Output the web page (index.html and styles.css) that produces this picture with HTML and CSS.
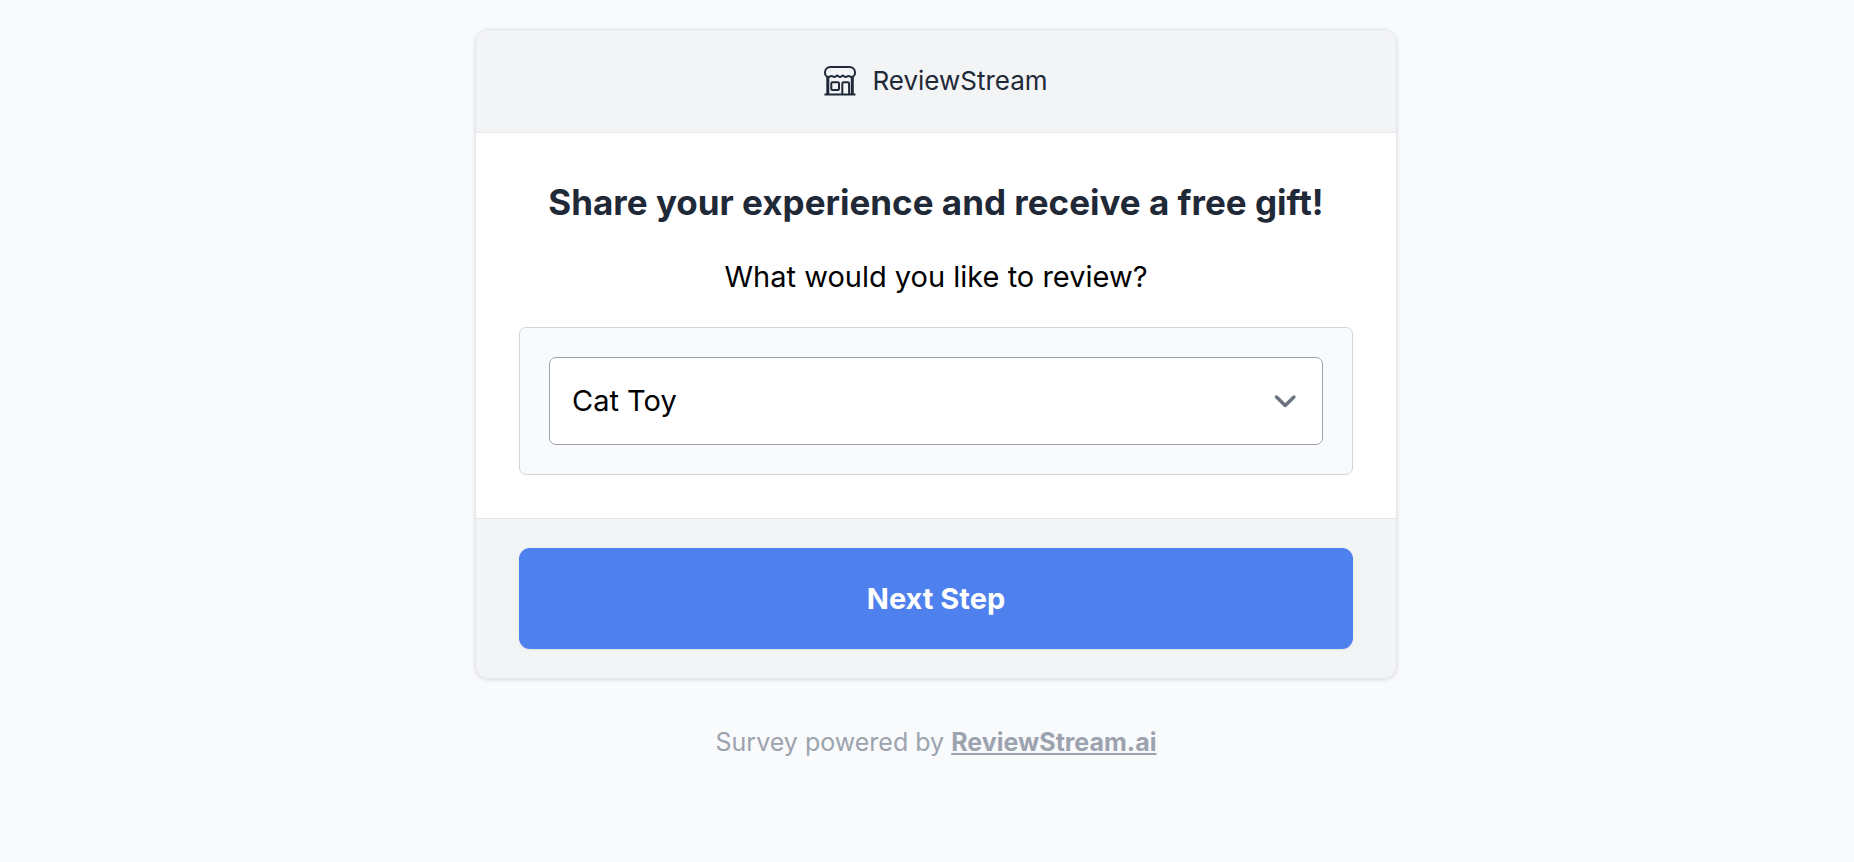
FILE: index.html
```html
<!DOCTYPE html>
<html lang="en">
<head>
<meta charset="utf-8">
<meta name="viewport" content="width=device-width, initial-scale=1">
<title>ReviewStream</title>
<link rel="stylesheet" href="styles.css">
</head>
<body>
<main class="survey">
  <form class="card">
    <header class="card-header">
      <svg class="store-icon" viewBox="0 0 32 32" aria-hidden="true">
        <path d="M6.500 2h19c3.500 0 5.500 2.500 5.500 5.500c0 2.500-1.500 4.500-3.500 4.500c-1.500 0-2-1-3-1s-1.500 1-2.900 1s-1.800-1.500-2.800-1.500s-1.500 1.500-2.800 1.500s-1.800-1.500-2.800-1.500s-1.500 1.500-2.800 1.500s-1.900-1-2.900-1s-1.500 1-3 1c-2 0-3.500-2-3.500-4.500c0-3 2-5.500 5.500-5.500z"/>
        <path class="store-walls" d="M3.800 12v17M28.300 12v17"/>
        <path d="M0.500 29.500h31"/>
        <rect x="7.300" y="17.200" width="7.700" height="7.700" rx="1.200"/>
        <path d="M18.300 29v-10.300c0-1 .5-1.500 1.500-1.500h3.800c1 0 1.500.5 1.500 1.500v10.300"/>
      </svg>
      <span class="brand">ReviewStream</span>
    </header>
    <div class="card-body">
      <h1 class="title">Share your experience and receive a free gift!</h1>
      <label class="question" for="product">What would you like to review?</label>
      <div class="panel">
        <div class="select-wrap">
          <select class="select" id="product">
            <option>Cat Toy</option>
          </select>
          <svg class="chevron" viewBox="0 0 24 24" aria-hidden="true"><path d="M3.500 8l8.700 8.500 8.700-8.500"/></svg>
        </div>
      </div>
    </div>
    <footer class="card-footer">
      <button class="next" type="button">Next Step</button>
    </footer>
  </form>
  <p class="powered">Survey powered by <a class="powered-link" href="#">ReviewStream.ai</a></p>
</main>
</body>
</html>
```
FILE: styles.css
```css
*, *::before, *::after { box-sizing: border-box; }

body {
  margin: 0;
  background: #f9fafb;
  font-family: Inter, Lato, sans-serif;
  color: #000;
}

.survey {
  display: flex;
  flex-direction: column;
  align-items: center;
  padding: 29px 0 29px 18px;
}

.card {
  width: 100%;
  max-width: 922px;
  border: 1px solid #e5e7eb;
  border-radius: 14px;
  background: #fff;
  box-shadow: 0 1px 4px rgba(0, 0, 0, 0.12);
  overflow: hidden;
}

.card-header {
  display: flex;
  align-items: center;
  justify-content: center;
  gap: 16px;
  padding: 32px 44px;
  background: #f3f4f6;
  border-bottom: 1px solid #e5e7eb;
  color: #1f2937;
}

.store-icon {
  width: 32px;
  height: 32px;
  fill: none;
  stroke: currentColor;
  stroke-width: 2;
  stroke-linejoin: round;
}

.store-walls { stroke-width: 3; }

.brand {
  font-size: 26px;
  line-height: 38px;
}

.card-body {
  display: flex;
  flex-direction: column;
  padding: 43px;
  text-align: center;
}

.title {
  margin: 0 0 28px;
  font-size: 35px;
  font-weight: 700;
  line-height: 52px;
  color: #1f2937;
}

.question {
  margin-bottom: 29px;
  font-size: 29px;
  line-height: 42px;
}

.panel {
  padding: 29px;
  background: #f9fafb;
  border: 1px solid #d1d5db;
  border-radius: 7px;
}

.select-wrap {
  display: grid;
  align-items: center;
}

.select, .chevron { grid-area: 1 / 1; }

.select {
  appearance: none;
  width: 100%;
  margin: 0;
  padding: 22px 64px 22px 22px;
  background: #fff;
  border: 1px solid #9ca3af;
  border-radius: 7px;
  font: inherit;
  font-size: 29px;
  line-height: 42px;
  color: #000;
}

.chevron {
  justify-self: end;
  width: 24px;
  height: 24px;
  margin-right: 26px;
  fill: none;
  stroke: #6b7280;
  stroke-width: 3.500;
  stroke-linecap: round;
  stroke-linejoin: round;
  pointer-events: none;
}

.card-footer {
  padding: 29px 43px;
  background: #f3f4f6;
  border-top: 1px solid #e5e7eb;
}

.next {
  display: block;
  width: 100%;
  padding: 29px;
  border: 0;
  border-radius: 11px;
  background: #4e80ee;
  box-shadow: 0 1px 3px rgba(0, 0, 0, 0.08);
  font: inherit;
  font-size: 29px;
  font-weight: 700;
  line-height: 43px;
  color: #fff;
}

.powered {
  margin: 43px 0 0;
  font-size: 25px;
  line-height: 40px;
  color: #9ca3af;
}

.powered-link {
  font-weight: 700;
  color: inherit;
  text-decoration: underline;
}
```
